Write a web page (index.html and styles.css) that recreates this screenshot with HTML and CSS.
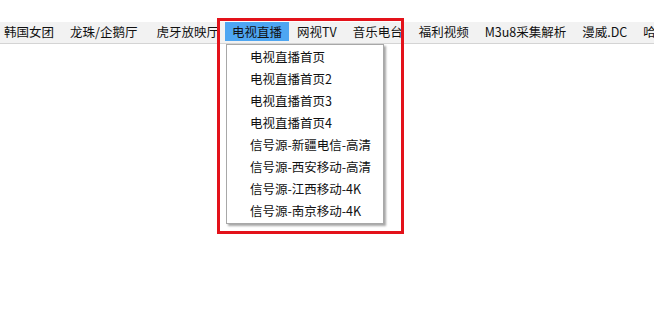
FILE: index.html
```html
<!DOCTYPE html>
<html lang="zh-CN">
<head>
    <meta charset="UTF-8">
    <title>菜单</title>
    <link rel="stylesheet" href="styles.css">
</head>
<body>
    <div class="menubar">
        <div class="menu-item">韩国女团</div>
        <div class="menu-item">龙珠/企鹅厅</div>
        <div class="menu-item wide">虎牙放映厅</div>
        <div class="menu-item open">电视直播
            <ul class="dropdown">
                <li>电视直播首页</li>
                <li>电视直播首页2</li>
                <li>电视直播首页3</li>
                <li>电视直播首页4</li>
                <li>信号源-新疆电信-高清</li>
                <li>信号源-西安移动-高清</li>
                <li>信号源-江西移动-4K</li>
                <li>信号源-南京移动-4K</li>
            </ul>
        </div>
        <div class="menu-item">网视TV</div>
        <div class="menu-item">音乐电台</div>
        <div class="menu-item">福利视频</div>
        <div class="menu-item">M3u8采集解析</div>
        <div class="menu-item">漫威.DC</div>
        <div class="menu-item">哈哈</div>
    </div>

    <!-- annotation box -->
    <div class="highlight-box"></div>
</body>
</html>
```

FILE: styles.css
```css
body {
    margin: 0;
    padding: 0;
    background: #fff;
    font-family: "Noto Sans CJK SC", "Noto Sans", sans-serif;
    font-size: 12.5px;
    color: #111;
    position: relative;
    height: 315px;
    overflow: hidden;
}

.menubar {
    margin-top: 22px;
    display: flex;
    white-space: nowrap;
    background-color: #f2f2f2;
    border-bottom: 1px solid #d4d4d4;
    height: 21px;
}

.menu-item {
    padding: 0 8px;
    line-height: 20px;
    position: relative;
}

.menu-item:first-child {
    padding-left: 4px;
}

.menu-item.wide {
    padding: 0 6px 0 11px;
}

.menu-item.open {
    background-color: #4ea6f2;
    padding: 0 7px;
    height: 19px;
}

.dropdown {
    list-style: none;
    margin: 0;
    padding: 1px 0;
    position: absolute;
    top: 22px;
    left: 1px;
    width: 156px;
    background: #fff;
    border: 1px solid #a8a8a8;
    box-shadow: 2px 2px 2px rgba(0, 0, 0, 0.35);
    z-index: 2;
}

.dropdown li {
    height: 22px;
    line-height: 22px;
    padding-left: 23px;
}

.highlight-box {
    position: absolute;
    left: 217px;
    top: 18px;
    width: 181px;
    height: 210px;
    border: 3px solid #e3121a;
    z-index: 3;
}
```
